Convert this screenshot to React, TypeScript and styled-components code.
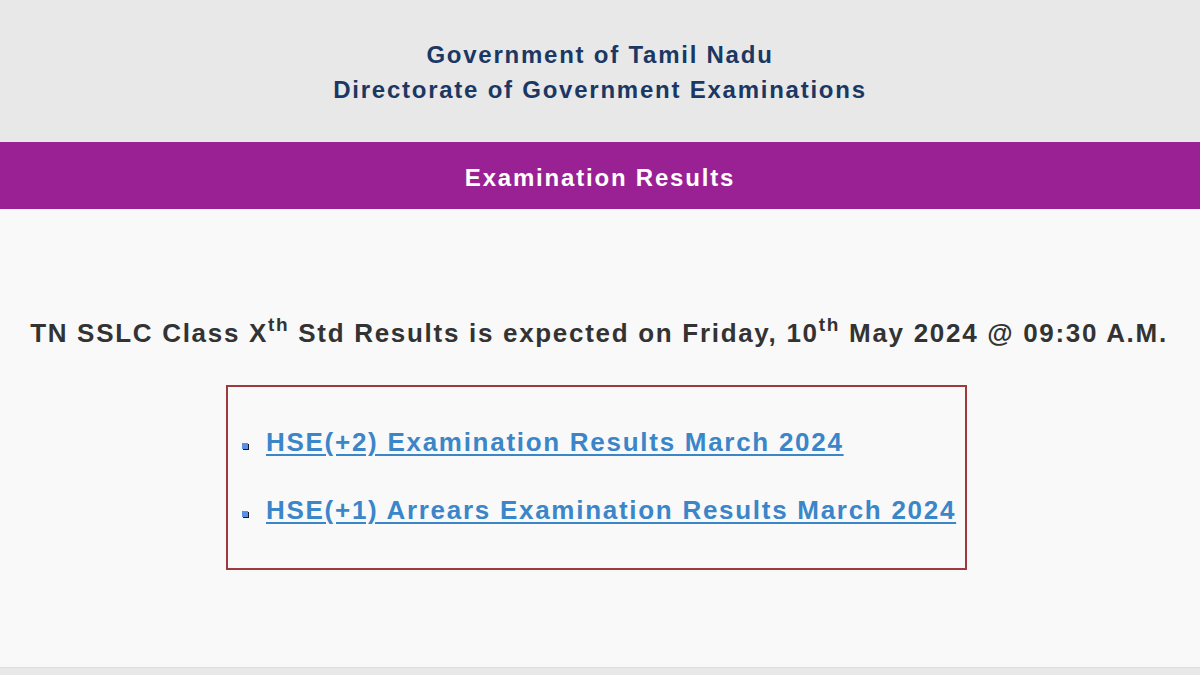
import styled, { createGlobalStyle } from "styled-components";

const GlobalStyle = createGlobalStyle`
  html, body {
    margin: 0;
    padding: 0;
    background: #f9f9f9;
  }
  body {
    font-family: "Liberation Sans", Arial, sans-serif;
  }
`;

const Page = styled.div`
  display: flex;
  flex-direction: column;
  height: 675px;
  overflow: hidden;
`;

const Header = styled.header`
  height: 142px;
  background: #e8e8e8;
  display: flex;
  flex-direction: column;
  align-items: center;
  justify-content: center;
  padding-top: 2px;
  box-sizing: border-box;
`;

const HeaderLine = styled.div`
  color: #1b3763;
  font-size: 24px;
  font-weight: bold;
  line-height: 35px;
  letter-spacing: 1.76px;
`;

const TitleBar = styled.div`
  height: 67px;
  background: #9a2194;
  color: #ffffff;
  font-size: 24px;
  font-weight: bold;
  letter-spacing: 1.8px;
  display: flex;
  align-items: center;
  justify-content: center;
  padding-top: 4px;
  box-sizing: border-box;
`;

const Main = styled.main`
  flex: 1;
  background: #f9f9f9;
  display: flex;
  flex-direction: column;
  align-items: center;
  padding-top: 106px;
`;

const Notice = styled.p`
  margin: 0 0 0 -2px;
  color: #333333;
  font-size: 26px;
  font-weight: bold;
  line-height: 36px;
  letter-spacing: 1.7px;

  sup {
    font-size: 19px;
    line-height: 0;
    vertical-align: 11px;
  }
`;

const LinkBox = styled.ul`
  list-style: none;
  margin: 34px 0 0 -7px;
  padding: 36px 0 39px 14px;
  width: 741px;
  box-sizing: border-box;
  border: 2px solid #9e3a3e;
  display: flex;
  flex-direction: column;
  gap: 30px;
`;

const LinkItem = styled.li`
  display: flex;
  align-items: center;
  gap: 18px;

  &::before {
    content: "";
    width: 6px;
    height: 6px;
    margin-top: 8px;
    background: #5b8fe3;
    box-shadow: 1px 1px 0 #1a1a2a;
    flex-shrink: 0;
  }
`;

const ResultLink = styled.a`
  color: #3b86c9;
  font-size: 26px;
  font-weight: bold;
  line-height: 38px;
  letter-spacing: 1.72px;
  text-decoration: underline;
  text-underline-offset: 3px;
  cursor: pointer;
`;

const Footer = styled.footer`
  height: 7px;
  background: #e8e8e8;
  border-top: 1px solid #dcdcdc;
`;

const links = [
  "HSE(+2) Examination Results March 2024",
  "HSE(+1) Arrears Examination Results March 2024",
];

export default function App() {
  return (
    <>
      <GlobalStyle />
      <Page>
        <Header>
          <HeaderLine>Government of Tamil Nadu</HeaderLine>
          <HeaderLine>Directorate of Government Examinations</HeaderLine>
        </Header>
        <TitleBar>Examination Results</TitleBar>
        <Main>
          <Notice>
            TN SSLC Class X<sup>th</sup> Std Results is expected on Friday,
            10<sup>th</sup> May 2024 @ 09:30 A.M.
          </Notice>
          <LinkBox>
            {links.map((label) => (
              <LinkItem key={label}>
                <ResultLink>{label}</ResultLink>
              </LinkItem>
            ))}
          </LinkBox>
        </Main>
        <Footer />
      </Page>
    </>
  );
}
